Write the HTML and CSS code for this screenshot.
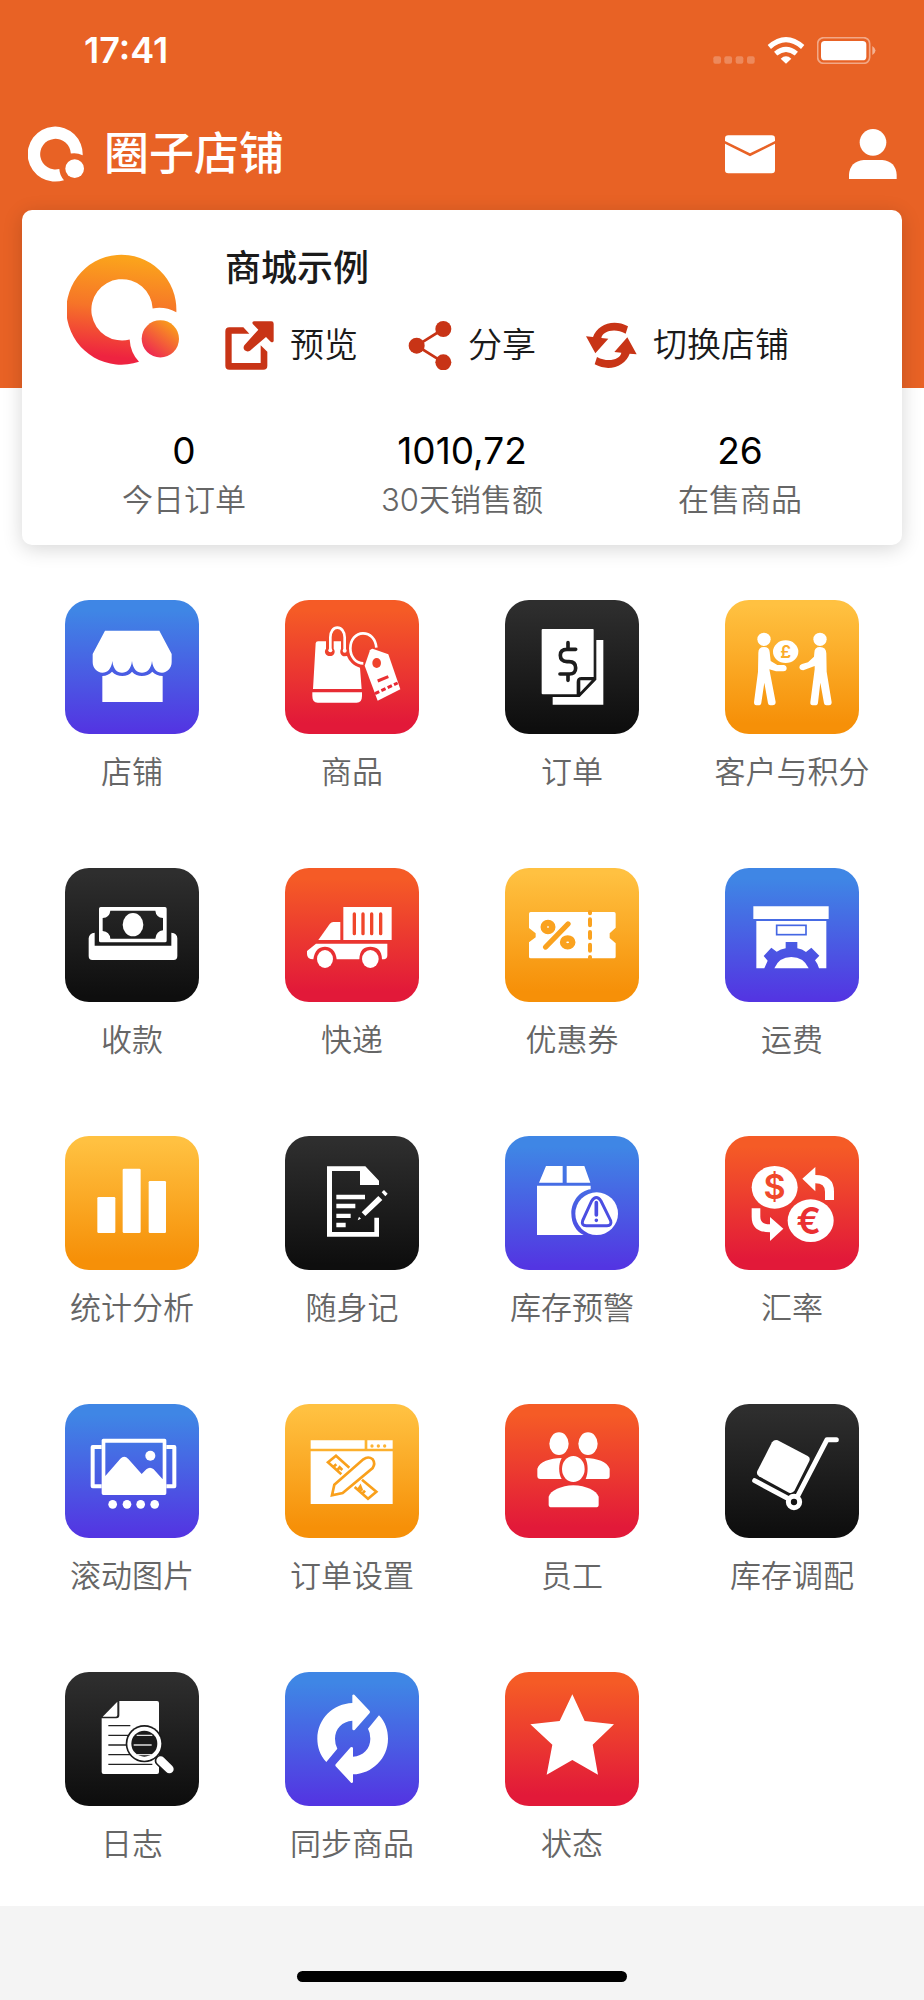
FILE: index.html
```html
<!DOCTYPE html>
<html lang="zh-CN">
<head>
    <meta charset="UTF-8">
    <meta name="viewport" content="width=device-width, initial-scale=1.0">
    <title>圈子店铺</title>
    <link rel="stylesheet" href="styles.css">
</head>
<body>

<header class="header">
    <div class="status-bar">
        <span class="time">17:41</span>
        <div class="status-icons">
            <svg width="42" height="27" viewBox="755 110 126 81" fill="#fff" opacity="0.25"><rect x="756" y="168" width="23" height="22" rx="6"/><rect x="789" y="168" width="23" height="22" rx="6"/><rect x="823" y="168" width="23" height="22" rx="6"/><rect x="857" y="168" width="23" height="22" rx="6"/></svg>
            <svg width="38" height="27" viewBox="915 110 114 81" fill="none" stroke="#fff" stroke-width="15"><path d="M922 140Q972 96 1022 140M941 160Q972 134 1003 160"/><path d="M956 175Q972 161 988 175L972 190Z" fill="#fff" stroke="none"/></svg>
            <svg width="60" height="27" viewBox="1065 110 180 81" fill="#fff"><rect x="1067" y="112" width="156" height="77" rx="18" fill="none" stroke="#fff" stroke-width="5" opacity="0.45"/><rect x="1077" y="122" width="136" height="58" rx="11"/><path d="M1231 137Q1250 150 1231 164Z" opacity="0.5"/></svg>
        </div>
    </div>
    <div class="nav">
        <svg class="brand-logo" viewBox="202 760 336 332" fill="#fff"><path d="M530 934A165 165 0 1 0 418 1083Q392 1055 390 1016A92 92 0 1 1 459 923Q495 916 530 934Z"/><circle cx="482" cy="1014" r="56"/></svg>
        <h1>圈子店铺</h1>
        <button class="nav-button" aria-label="消息">
            <svg width="50" height="50" viewBox="791 389 150 150" fill="#fff"><path d="M801 408H931Q941 408 941 418V425L866 462L791 425V418Q791 408 801 408Z"/><path d="M791 433L866 471L941 433V512Q941 522 931 522H801Q791 522 791 512Z"/></svg>
        </button>
        <button class="nav-button" aria-label="我的">
            <svg width="50" height="50" viewBox="1160 387 150 150" fill="#fff"><circle cx="1235" cy="427" r="40"/><path d="M1163 537V524Q1166 484 1207 480H1263Q1303 484 1306 524V537Z"/></svg>
        </button>
    </div>
</header>

<main class="main">
    <section class="card">
        <div class="shop">
            <svg class="shop-logo" viewBox="202 760 336 332">
                <defs>
                    <linearGradient id="ring" x1="0.2" y1="0" x2="0.1" y2="1"><stop offset="0" stop-color="#fba31c"/><stop offset="0.45" stop-color="#f67428"/><stop offset="0.9" stop-color="#ee2340"/></linearGradient>
                    <linearGradient id="dot" x1="0.8" y1="0.1" x2="0.2" y2="0.9"><stop offset="0" stop-color="#f99a1c"/><stop offset="1" stop-color="#ee2a50"/></linearGradient>
                </defs>
                <path d="M530 934A165 165 0 1 0 418 1083Q392 1055 390 1016A92 92 0 1 1 459 923Q495 916 530 934Z" fill="url(#ring)"/><circle cx="482" cy="1014" r="56" fill="url(#dot)"/>
            </svg>
            <div class="shop-info">
                <h2>商城示例</h2>
                <div class="actions">
                    <button class="action">
                        <svg width="49" height="49" viewBox="681 964 147 147" fill="#c83416"><path d="M694 983H736L754 1002H701V1090H788V1037L808 1056V1098Q808 1110 796 1110H694Q682 1110 682 1098V995Q682 983 694 983Z"/><path d="M768 965H820Q827 965 827 972V1024Q825 1030 818 1026L804 1012L756 1053Q748 1058 740 1052Q734 1045 739 1037L781 990L765 974Q760 967 768 965Z"/></svg>
                        预览
                    </button>
                    <button class="action">
                        <svg width="44" height="49" viewBox="1214 968 132 147" fill="#c83416"><path d="M1320 992L1240 1042L1320 1092" fill="none" stroke="#c83416" stroke-width="8"/><circle cx="1240" cy="1042" r="24"/><circle cx="1320" cy="992" r="24"/><circle cx="1320" cy="1092" r="24"/></svg>
                        分享
                    </button>
                    <button class="action">
                        <svg width="51" height="49" viewBox="381 971 153 147" fill="#c83416"><path id="turn" d="M507 987L500 1009C465 990 430 1003 427 1022L448 1024L409 1068L381 1017L402 1019C415 982 463 963 507 987Z"/><use href="#turn" transform="rotate(180 457 1044)"/></svg>
                        切换店铺
                    </button>
                </div>
            </div>
        </div>
        <div class="stats">
            <div class="stat"><strong>0</strong><span>今日订单</span></div>
            <div class="stat"><strong>1010,72</strong><span>30天销售额</span></div>
            <div class="stat"><strong>26</strong><span>在售商品</span></div>
        </div>
    </section>

    <nav class="menu">
        <a class="menu-item" href="#">
            <svg class="tile blue" viewBox="76 60 402 402"><path d="M196 152H359L396 222V246C396 264 383 278 367 278C352 278 340 268 337 243C334 268 322 278 307 278C292 278 280 268 277 243C274 268 262 278 247 278C232 278 221 268 218 243C215 268 203 278 188 278C172 278 159 264 159 246V222Z"/><path d="M188 288Q206 287 217 275Q230 288 248 288Q266 288 277 275Q289 288 307 288Q325 288 338 275Q349 287 369 288V366H188Z"/></svg>
            <span>店铺</span>
        </a>
        <a class="menu-item" href="#">
            <svg class="tile red" viewBox="735 60 402 402"><path d="M834 184H858V206C850 216 858 228 870 228S888 216 881 206V184H903V206C897 218 904 229 914 229L921 228C927 243 940 257 960 263L965 327H819L827 190Q828 184 834 184Z"/><path d="M817 337H966V347Q966 368 950 368H833Q817 368 817 347Z"/><path d="M871 211V172C871 155 880 143 892 143S914 155 914 172V212M1009 203C1007 176 990 160 969 160C947 160 931 180 931 205C931 231 948 250 970 250" fill="none" stroke="#fff" stroke-width="8"/><circle cx="871" cy="211" r="6"/><circle cx="914" cy="212" r="6"/><path d="M990 211Q994 205 1000 207L1045 223L1081 328L1013 362L974 257Z"/><ellipse cx="1010" cy="249" rx="13" ry="15" fill="#ef432c"/><path d="M1013 303L1045 290" stroke="#ea3032" stroke-width="9"/><path d="M1005 341L1073 309" stroke="#e82834" stroke-width="9" stroke-dasharray="14 7"/></svg>
            <span>商品</span>
        </a>
        <a class="menu-item" href="#">
            <svg class="tile dark" viewBox="76 60 402 402"><path d="M189 147H340Q342 147 342 150V291H306Q291 291 291 306V343H189Q186 343 186 340V150Q186 147 189 147Z"/><path d="M350 180H371V374H219V351H300L350 299Z"/><path d="M302 301H336L302 337Z"/><path d="M288 208H262Q242 208 242 226T262 245H268Q288 245 288 264T268 282H241M265 188V208M265 282V301" fill="none" stroke="#1d1d1d" stroke-width="11" stroke-linecap="round"/></svg>
            <span>订单</span>
        </a>
        <a class="menu-item" href="#">
            <svg class="tile amber" viewBox="733 60 402 402"><circle cx="850" cy="178" r="20"/><path d="M833 218Q833 201 850 201Q866 201 867 216L870 243L890 255H908Q918 256 918 265T908 274H886L866 268L885 366Q885 376 875 376H869Q863 376 862 370L851 308L842 368Q841 376 833 376H827Q820 376 820 367L832 275Z"/><ellipse cx="915" cy="215" rx="38" ry="34"/><circle cx="1018" cy="178" r="20"/><path d="M1001 218Q1001 201 1018 201Q1036 201 1037 220L1038 275L1053 367Q1053 376 1045 376H1037Q1031 376 1030 370L1019 308L1012 368Q1011 376 1003 376H996Q988 376 989 367L1002 268V258L968 271Q957 271 956 262Q956 255 964 252L982 247L1000 230Z"/><text class="coin pound" x="915" y="234">£</text></svg>
            <span>客户与积分</span>
        </a>

        <a class="menu-item" href="#">
            <svg class="tile dark" viewBox="76 54 402 402"><path fill-rule="evenodd" d="M183 171H376Q381 171 381 176V272Q381 277 376 277H183Q178 277 178 272V176Q178 171 183 171ZM212 182Q210 202 189 204V243Q210 245 212 266H347Q350 243 370 241V204Q349 202 347 182Z"/><ellipse cx="280" cy="224" rx="31" ry="35"/><path d="M165 248V287H395V248Q413 250 413 265V318Q413 330 402 330H158Q147 330 147 318V265Q148 250 165 248Z"/></svg>
            <span>收款</span>
        </a>
        <a class="menu-item" href="#">
            <svg class="tile red" viewBox="735 54 402 402"><path d="M910 171H1055V270H910Z"/><path d="M943 192V251M969 192V251M995 192V251M1022 192V251" stroke="#f0462b" stroke-width="10" stroke-linecap="round"/><path d="M835 270L869 222Q874 216 880 216H901V270Z"/><path d="M828 281H1042V316Q1042 326 1033 328H1026C1026 300 1010 290 991 290S959 300 958 328H890C888 302 872 290 855 290S824 300 820 328Q801 328 801 312V303Z"/><ellipse cx="855" cy="327" rx="24" ry="27"/><ellipse cx="991" cy="327" rx="25" ry="27"/></svg>
            <span>快递</span>
        </a>
        <a class="menu-item" href="#">
            <svg class="tile amber" viewBox="76 54 402 402"><path d="M153 186H403Q408 186 408 191V233L390 250V264L408 280V320Q408 325 403 325H153Q148 325 148 320V277L168 262V250L148 234V191Q148 186 153 186Z"/><path d="M331 186V190M331 208V226M331 246V264M331 284V302M331 321V325" stroke="#faa21f" stroke-width="12" stroke-linecap="round"/><path d="M198 291L265 222" stroke="#faa21f" stroke-width="16" stroke-linecap="round"/><ellipse cx="205" cy="231" rx="13" ry="12" fill="none" stroke="#faa21f" stroke-width="19"/><ellipse cx="264" cy="277" rx="14" ry="12" fill="none" stroke="#faa21f" stroke-width="19"/></svg>
            <span>优惠券</span>
        </a>
        <a class="menu-item" href="#">
            <svg class="tile blue" viewBox="733 54 402 402"><path d="M818 169H1044V207H818Z"/><path d="M827 213H1037V355H1015Q1011 341 1003 331L1016 317L992 293L976 306Q965 297 950 295V276H915V295Q900 297 888 305L872 293L849 318L861 332L851 355H827Z"/><path d="M881 355Q895 321 932 321T984 355Z"/><rect x="888" y="226" width="88" height="28" fill="none" stroke="#4567e3" stroke-width="5"/></svg>
            <span>运费</span>
        </a>

        <a class="menu-item" href="#">
            <svg class="tile amber" viewBox="76 48 402 402"><rect x="173" y="231" width="54" height="108" rx="4"/><rect x="249" y="146" width="54" height="193" rx="4"/><rect x="327" y="183" width="52" height="156" rx="4"/></svg>
            <span>统计分析</span>
        </a>
        <a class="menu-item" href="#">
            <svg class="tile dark" viewBox="735 48 402 402"><path d="M861 139H976L1017 182V195H960V153H876V336H1003V293H1017V350H861Z"/><path d="M889 224H975V238H889ZM889 251H946V265H889ZM889 281H932V294H889ZM889 308H917V322H889Z"/><path d="M965 277L1015 228L1027 240L976 288ZM953 301L957 290L963 296ZM1032 210L1043 221L1036 229L1025 217Z"/></svg>
            <span>随身记</span>
        </a>
        <a class="menu-item" href="#">
            <svg class="tile blue" viewBox="76 48 402 402"><path d="M199 138H249V188H178ZM261 138H314L332 188H261Z"/><path d="M172 197H333V208C300 212 275 245 275 280C275 312 290 335 312 345H172Z"/><ellipse cx="351" cy="281" rx="64" ry="64"/><path d="M336 243Q350 222 364 243L393 302Q397 317 382 317H320Q304 317 309 302Z" fill="none" stroke="#4b4ee2" stroke-width="9"/><path d="M350 248V285M350 301V301" stroke="#4b4ee2" stroke-width="11" stroke-linecap="round"/></svg>
            <span>库存预警</span>
        </a>
        <a class="menu-item" href="#">
            <svg class="tile red" viewBox="733 48 402 402"><ellipse cx="882" cy="202" rx="69" ry="64"/><ellipse cx="990" cy="302" rx="69" ry="64"/><path d="M965 176L1004 141V165Q1060 165 1060 215V240H1033V215Q1033 190 1004 190V214Z"/><path d="M813 265H839V290Q839 313 868 313V291L908 326L868 363V337Q813 337 813 290Z"/><text class="coin dollar" x="882" y="238">$</text><text class="coin euro" x="984" y="341">€</text></svg>
            <span>汇率</span>
        </a>

        <a class="menu-item" href="#">
            <svg class="tile blue" viewBox="76 42 402 402"><path d="M186 171H159V289H186M380 171H404V289H380" fill="none" stroke="#fff" stroke-width="12" stroke-linejoin="round"/><path fill-rule="evenodd" d="M191 146H375Q380 146 380 151V310Q380 315 375 315H191Q186 315 186 310V151Q186 146 191 146ZM197 158V258L242 206Q254 194 266 207L306 252L320 238Q331 228 342 238L369 268V158Z"/><circle cx="332" cy="197" r="15"/><circle cx="219" cy="343" r="13"/><circle cx="262" cy="343" r="13"/><circle cx="303" cy="343" r="13"/><circle cx="345" cy="343" r="13"/></svg>
            <span>滚动图片</span>
        </a>
        <a class="menu-item" href="#">
            <svg class="tile amber" viewBox="735 42 402 402"><path d="M812 151H974V176H812ZM982 151H1058V176H982ZM812 184H1058V342H812Z"/><g fill="#fdb332"><circle cx="996" cy="168" r="5"/><circle cx="1015" cy="168" r="5"/><circle cx="1034" cy="168" r="5"/></g><path d="M876 316L883 284L970 208Q985 197 998 208Q1007 221 998 234L908 309ZM928 233L888 197L864 217L904 253M879 232L889 223M891 242L899 232L907 240M966 269L1009 305L984 326L944 291M954 300L961 289L966 302M967 311L975 302" fill="none" stroke="#f9a01c" stroke-width="8"/></svg>
            <span>订单设置</span>
        </a>
        <a class="menu-item" href="#">
            <svg class="tile red" viewBox="76 42 402 402"><ellipse cx="238" cy="161" rx="29" ry="34"/><ellipse cx="325" cy="161" rx="29" ry="34"/><ellipse cx="281" cy="237" rx="34" ry="39"/><path d="M246 204C236 222 236 250 246 267H182Q173 267 173 258V236C180 215 210 205 246 204Z"/><path d="M317 204C353 205 382 215 390 236V258Q390 267 381 267H318C326 250 326 222 317 204Z"/><path d="M281 286C320 287 350 302 357 320V344Q357 352 348 352H216Q207 352 207 344V320C212 302 245 287 281 286Z"/></svg>
            <span>员工</span>
        </a>
        <a class="menu-item" href="#">
            <svg class="tile dark" viewBox="733 42 402 402"><path d="M874 157Q881 148 891 151L981 198Q990 203 986 213L942 301Q936 312 925 308L835 259Q826 253 830 243Z"/><path d="M1067 149H1039L949 322M822 272L925 327" fill="none" stroke="#fff" stroke-width="15" stroke-linecap="round" stroke-linejoin="round"/><circle cx="940" cy="336" r="17" fill="#131313" stroke="#fff" stroke-width="15"/></svg>
            <span>库存调配</span>
        </a>

        <a class="menu-item" href="#">
            <svg class="tile dark" viewBox="0 0 402 402"><path d="M163 87H276Q282 87 282 93V300Q282 306 276 306H116Q110 306 110 300V139H154Q163 139 163 130Z"/><path d="M157 89V128Q157 134 152 134H113Z"/><path d="M130 161H196M130 190H260M130 219H260M130 248H260M130 277H262" stroke="#222" stroke-width="4"/><path d="M286 266L313 291" stroke="#1a1a1a" stroke-width="34" stroke-linecap="round"/><path d="M287 266L313 291" stroke="#fff" stroke-width="26" stroke-linecap="round"/><circle cx="238" cy="215" r="56" fill="#1a1a1a"/><circle cx="238" cy="215" r="51"/><circle cx="238" cy="215" r="39" fill="#1a1a1a"/><path d="M215 190H262M206 219H260M215 248H261" stroke="#ddd" stroke-width="4"/></svg>
            <span>日志</span>
        </a>
        <a class="menu-item" href="#">
            <svg class="tile blue" viewBox="0 0 402 402"><path id="sync" d="M202 70Q204 66 208 68L254 117Q256 120 254 123L209 174Q203 177 202 171V146C172 148 150 170 150 200Q150 218 157 230L124 270C105 250 97 225 97 200C97 140 145 95 202 93Z"/><use href="#sync" transform="rotate(180 203 200)"/></svg>
            <span>同步商品</span>
        </a>
        <a class="menu-item" href="#">
            <svg class="tile red" viewBox="0 0 402 402"><path d="M202 67L239 147L327 157L263 218L279 308L202 264L125 308L142 218L76 157L164 147Z"/></svg>
            <span>状态</span>
        </a>
    </nav>
</main>

<footer class="footer">
    <div class="home-indicator"></div>
</footer>

</body>
</html>
```
FILE: styles.css
```css
* {
    box-sizing: border-box;
}
body {
    margin: 0;
    min-height: 100vh;
    display: flex;
    flex-direction: column;
    background-color: #f4f4f4;
    color: #1a1a1a;
    font-family: Inter, "Noto Sans CJK SC", sans-serif;
}
h1, h2 {
    margin: 0;
    font-weight: 500;
}
button {
    padding: 0;
    border: none;
    background: none;
    color: inherit;
    font-family: inherit;
    cursor: pointer;
}
svg {
    display: block;
    flex-shrink: 0;
}

/* Orange header, the card overlaps its lower part */
.header {
    height: 388px;
    background-color: #e86225;
    color: #fff;
}
.status-bar {
    display: flex;
    align-items: center;
    justify-content: space-between;
    height: 100px;
    padding: 0 47px 0 84px;
}
.time {
    font-size: 36px;
    font-weight: 600;
}
.status-icons {
    display: flex;
    gap: 12px;
}
.nav {
    display: flex;
    align-items: center;
    height: 108px;
    padding: 0 26px 0 28px;
}
.brand-logo {
    width: 56px;
    height: 56px;
}
.nav h1 {
    flex: 1;
    margin-left: 20px;
    font-size: 45px;
    line-height: 60px;
}
.nav-button {
    margin-left: 73px;
}

.main {
    background-color: #fff;
    padding-bottom: 40px;
}

/* Shop card */
.card {
    position: relative;
    margin: -178px 22px 0;
    padding: 36px 23px 22px;
    background-color: #fff;
    border-radius: 10px;
    box-shadow: 0 4px 20px rgba(0, 0, 0, 0.16);
}
.shop {
    display: flex;
    align-items: center;
    gap: 46px;
    padding-left: 22px;
}
.shop-logo {
    width: 112px;
    height: 111px;
}
.shop-info h2 {
    font-size: 36px;
    line-height: 44px;
}
.actions {
    display: flex;
    gap: 50px;
    margin-top: 28px;
}
.action {
    display: flex;
    align-items: center;
    gap: 16px;
    font-size: 34px;
    font-weight: 350;
    line-height: 54px;
    white-space: nowrap;
}
.stats {
    display: grid;
    grid-template-columns: repeat(3, 1fr);
    margin-top: 54px;
    text-align: center;
}
.stat {
    display: flex;
    flex-direction: column;
}
.stat strong {
    color: #000;
    font-size: 37px;
    font-weight: 400;
    line-height: 50px;
}
.stat span {
    color: #666;
    font-size: 31px;
    font-weight: 350;
    line-height: 47px;
}

/* Menu grid */
.menu {
    display: grid;
    grid-template-columns: repeat(4, 1fr);
    row-gap: 74px;
    padding: 55px 22px 0;
}
.menu-item {
    display: flex;
    flex-direction: column;
    align-items: center;
    gap: 16px;
    color: #666;
    font-size: 31px;
    font-weight: 350;
    line-height: 44px;
    text-decoration: none;
    white-space: nowrap;
}
.tile {
    width: 134px;
    height: 134px;
    border-radius: 24px;
    fill: #fff;
}
.blue {
    background: linear-gradient(#3f86e5 8%, #5335e2 98%);
}
.red {
    background: linear-gradient(#f55b26 8%, #e21939 92%);
}
.dark {
    background: linear-gradient(#2e2e2e 4%, #0e0e0e 96%);
}
.amber {
    background: linear-gradient(#ffc141 4%, #f69008 92%);
}
.coin {
    font-family: Inter, sans-serif;
    font-weight: 600;
    text-anchor: middle;
}
.pound {
    fill: #fbac2b;
    font-size: 52px;
}
.dollar {
    fill: #f0482b;
    font-size: 102px;
}
.euro {
    fill: #ea3032;
    font-size: 110px;
}

.footer {
    display: flex;
    flex: 1;
    align-items: flex-end;
    justify-content: center;
    padding-bottom: 18px;
}
.home-indicator {
    width: 330px;
    height: 11px;
    background-color: #000;
    border-radius: 6px;
}
```
